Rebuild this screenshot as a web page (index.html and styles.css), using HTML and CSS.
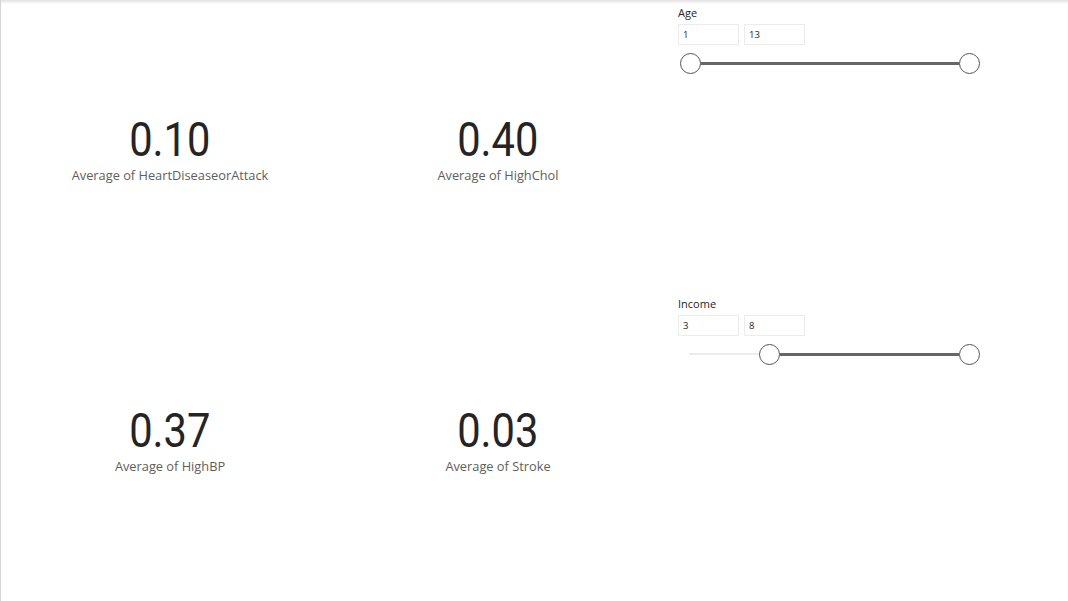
FILE: index.html
```html
<!DOCTYPE html>
<html>
<head>
<meta charset="utf-8">
<link rel="stylesheet" href="styles.css">
</head>
<body>
<div class="page">
  <div class="cards">
    <div class="card">
      <div class="value"><span>0.10</span></div>
      <div class="label">Average of HeartDiseaseorAttack</div>
    </div>
    <div class="card">
      <div class="value"><span>0.40</span></div>
      <div class="label">Average of HighChol</div>
    </div>
    <div class="card">
      <div class="value"><span>0.37</span></div>
      <div class="label">Average of HighBP</div>
    </div>
    <div class="card">
      <div class="value"><span>0.03</span></div>
      <div class="label">Average of Stroke</div>
    </div>
  </div>
  <div class="slicers">
    <div class="slicer">
      <div class="slicer-title">Age</div>
      <div class="inputs">
        <div class="box">1</div>
        <div class="box">13</div>
      </div>
      <div class="slider">
        <div class="knob"></div>
        <div class="track-on"></div>
        <div class="knob"></div>
      </div>
    </div>
    <div class="slicer">
      <div class="slicer-title">Income</div>
      <div class="inputs">
        <div class="box">3</div>
        <div class="box">8</div>
      </div>
      <div class="slider">
        <div class="track-off" style="width:70px"></div>
        <div class="knob"></div>
        <div class="track-on"></div>
        <div class="knob"></div>
      </div>
    </div>
  </div>
</div>
</body>
</html>
```
FILE: styles.css
```css
html, body {
  margin: 0;
  padding: 0;
  background: #ffffff;
}
.page {
  width: 1068px;
  height: 601px;
  box-sizing: border-box;
  border-left: 1px solid #d6d6d6;
  box-shadow: inset 0 4px 3px -2px rgba(0,0,0,0.12);
  display: flex;
  padding-top: 5px;
  overflow: hidden;
  font-family: "Open Sans", "Noto Sans", sans-serif;
}
.cards {
  display: grid;
  grid-template-columns: 328px 328px;
  grid-template-rows: 291px 291px;
  padding-left: 5px;
  width: 672px;
  flex: none;
}
.card {
  display: flex;
  flex-direction: column;
  align-items: center;
  justify-content: center;
}
.value {
  font-family: "Roboto", sans-serif;
  font-size: 49px;
  line-height: 48px;
  color: #252423;
  height: 48px;
}
.value span {
  display: inline-block;
  transform: scaleX(0.85);
}
.label {
  margin-top: 3px;
  font-family: "Open Sans", sans-serif;
  font-size: 12.8px;
  line-height: 16px;
  color: #605e5c;
  margin-bottom: 2px;
}
.slicers {
  display: grid;
  grid-template-rows: 291px 291px;
  width: 310px;
}
.slicer {
  display: flex;
  flex-direction: column;
  padding-top: 1px;
}
.slicer-title {
  font-size: 11px;
  line-height: 14px;
  color: #252423;
  height: 14px;
  margin-bottom: 4px;
}
.inputs {
  display: flex;
  gap: 5px;
}
.box {
  width: 61px;
  height: 21px;
  box-sizing: border-box;
  border: 1px solid #ececec;
  font-size: 9.5px;
  line-height: 19px;
  padding-left: 4px;
  color: #252423;
}
.slider {
  display: flex;
  align-items: center;
  margin-top: 7px;
  padding-left: 2px;
  width: 302px;
  box-sizing: border-box;
  height: 22px;
}
.track-off {
  height: 2px;
  background: #ececec;
  flex: none;
  margin-left: 9px;
}
.track-on {
  height: 3px;
  background: #666666;
  flex: 1;
}
.knob {
  width: 21px;
  height: 21px;
  box-sizing: border-box;
  border: 1.5px solid #555555;
  border-radius: 50%;
  background: #ffffff;
  flex: none;
}
```
